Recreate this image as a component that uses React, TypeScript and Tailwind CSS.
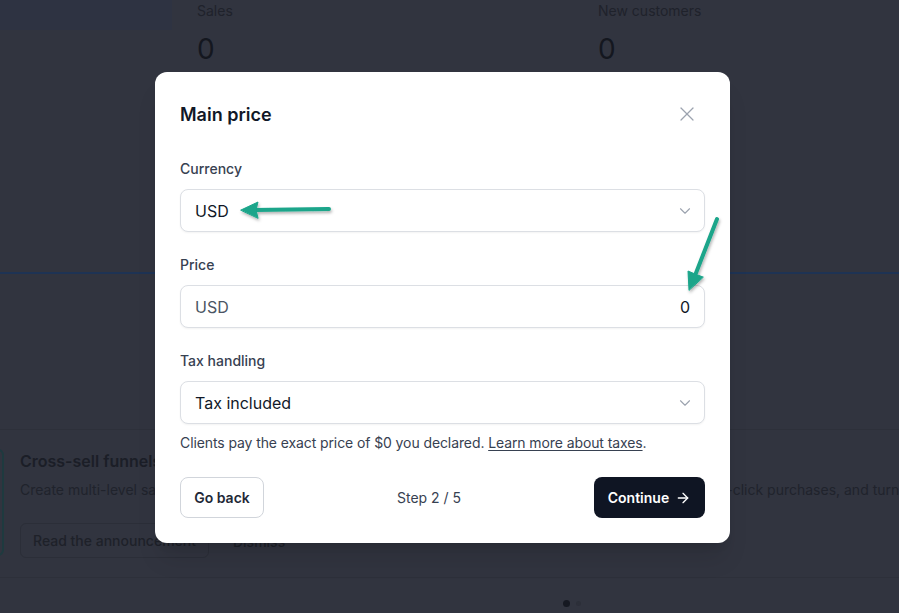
import { X, ChevronDown, ArrowRight } from "lucide-react";

const font = { fontFamily: "Inter, 'Noto Sans', sans-serif" };

function Field({ label, children }: { label: string; children: React.ReactNode }) {
  return (
    <div className="flex flex-col gap-[10px]">
      <div className="text-sm font-medium leading-5 text-[#374151]">{label}</div>
      {children}
    </div>
  );
}

function SelectBox({ value }: { value: string }) {
  return (
    <div className="flex h-[43px] items-center justify-between rounded-lg border border-[#dcdfe4] bg-white pl-[14px] pr-[10px] shadow-[0_1px_2px_rgba(0,0,0,0.05)]">
      <span className="text-base text-[#111827]">{value}</span>
      <ChevronDown className="h-[18px] w-[18px] text-[#9ca3af]" strokeWidth={1.5} />
    </div>
  );
}

export default function App() {
  return (
    <div className="relative h-[613px] w-full overflow-hidden bg-[#31343f]" style={font}>
      {/* dimmed page behind the dialog */}
      <div className="flex h-[274px] border-b-2 border-[#1e3354]">
        <div className="w-[172px]">
          <div className="h-[30px] bg-[#2e3342]" />
        </div>
        <div className="grid flex-1 grid-cols-[401px_1fr] pl-[25px]">
          <div className="flex flex-col">
            <div className="mt-[1px] text-sm leading-5 text-[#1f222b]">Sales</div>
            <div className="mt-[10px] text-[28px] leading-9 text-[#14171f]">0</div>
          </div>
          <div className="flex flex-col">
            <div className="mt-[1px] text-sm leading-5 text-[#1f222b]">New customers</div>
            <div className="mt-[10px] text-[28px] leading-9 text-[#14171f]">0</div>
          </div>
        </div>
      </div>
      <div className="h-[156px] border-b border-[#2d303a]" />
      <div className="flex h-[148px] gap-[16px] overflow-hidden border-b border-[#2d303a] pt-[19px]">
        <div className="-ml-[20px] h-[107px] w-[24px] shrink-0 rounded-md border-2 border-[#1e3a3f]" />
        <div className="flex min-w-0 flex-col">
          <div className="text-base font-semibold leading-6 text-[#1b1e27]">Cross-sell funnels</div>
          <div className="mt-[7px] whitespace-nowrap text-sm leading-5 text-[#20232c]">
            Create multi-level sales funnels with upsells, downsells and order bumps, offer your loyal clients faster one-click purchases, and turn every order into more revenue.
          </div>
          <div className="mt-[23px] flex items-center gap-[24px]">
            <div className="flex h-[35px] items-center rounded-md border border-[#2b2e38] px-[12px] text-sm font-medium text-[#1e2129]">
              Read the announcement
            </div>
            <div className="mt-[2px] text-sm font-medium text-[#1e2129]">Dismiss</div>
          </div>
        </div>
      </div>
      <div className="flex items-center gap-[6px] pl-[563px] pt-[22px]">
        <div className="h-[7px] w-[7px] rounded-full bg-[#161922]" />
        <div className="h-[5px] w-[5px] rounded-full bg-[#2c2f39]" />
      </div>

      {/* dialog */}
      <div className="absolute left-[155px] top-[72px] w-[575px] rounded-xl bg-white px-[25px] pb-[25px] pt-[28px] shadow-xl">
        <div className="flex h-7 items-center justify-between">
          <h2 className="mt-[2px] text-lg font-semibold text-[#111827]">Main price</h2>
          <X className="mr-[6px] h-[24px] w-[24px] text-[#9ca3af]" strokeWidth={1.2} />
        </div>

        <div className="mt-[31px] flex flex-col gap-[23px]">
          <Field label="Currency">
            <SelectBox value="USD" />
          </Field>
          <Field label="Price">
            <div className="flex h-[43px] items-center justify-between rounded-lg border border-[#dcdfe4] bg-white px-[14px] shadow-[0_1px_2px_rgba(0,0,0,0.05)]">
              <span className="text-base text-[#4b5563]">USD</span>
              <span className="text-base text-[#111827]">0</span>
            </div>
          </Field>
          <Field label="Tax handling">
            <SelectBox value="Tax included" />
          </Field>
        </div>

        <p className="mt-[9px] text-sm leading-5 tracking-[-0.1px] text-[#374151]">
          Clients pay the exact price of $0 you declared.{" "}
          <span className="underline underline-offset-2">Learn more about taxes</span>.
        </p>

        <div className="mt-[24px] flex items-center justify-between">
          <button className="h-[41px] w-[84px] rounded-lg border border-[#d1d5db] bg-white text-sm font-semibold text-[#1f2937]">
            Go back
          </button>
          <span className="text-sm text-[#374151]">Step 2 / 5</span>
          <button className="flex h-[41px] w-[111px] items-center justify-center gap-[6px] rounded-lg bg-[#0f1523] text-sm font-semibold text-white">
            Continue
            <ArrowRight className="h-4 w-4" strokeWidth={2} />
          </button>
        </div>
      </div>

      {/* annotation arrows */}
      <svg className="pointer-events-none absolute left-0 top-0" width="899" height="613" viewBox="0 0 899 613">
        <defs>
          <filter id="sh" x="-20%" y="-20%" width="140%" height="140%">
            <feDropShadow dx="1" dy="2" stdDeviation="1.5" floodColor="#000" floodOpacity="0.3" />
          </filter>
        </defs>
        <g filter="url(#sh)" fill="#1aa58a" stroke="#1aa58a" strokeLinecap="round" strokeLinejoin="round">
          <line x1="329" y1="209" x2="254" y2="210" strokeWidth="4" />
          <path d="M241 210 L258 202 L256 210 L258 218 Z" strokeWidth="1" />
          <line x1="717" y1="219" x2="696" y2="273" strokeWidth="4" />
          <path d="M689 290 L688 271 L695 274 L703 277 Z" strokeWidth="1" />
        </g>
      </svg>
    </div>
  );
}
